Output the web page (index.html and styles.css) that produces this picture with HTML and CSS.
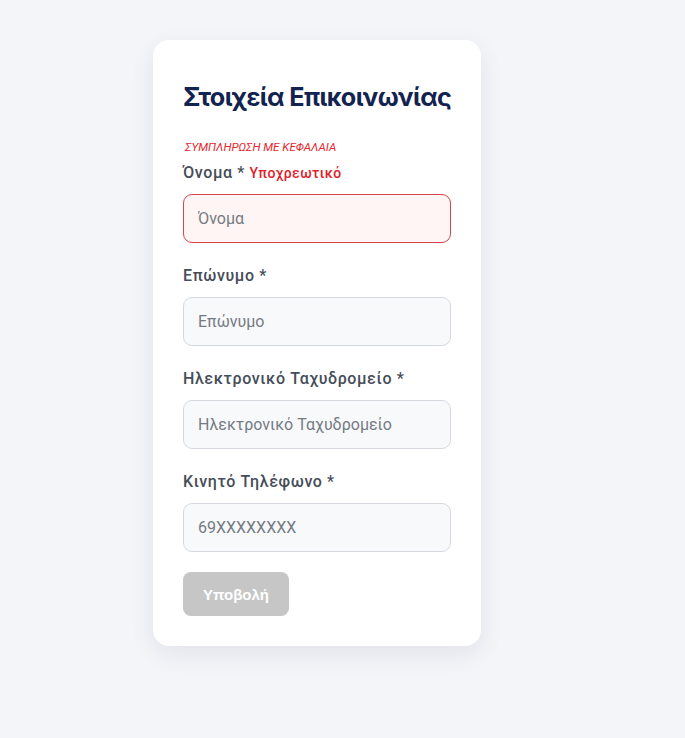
FILE: index.html
```html
<!DOCTYPE html>
<html lang="el">
<head>
<meta charset="utf-8">
<link rel="stylesheet" href="styles.css">
</head>
<body>
<div class="page">
  <form class="card">
    <h1 class="title">Στοιχεία Επικοινωνίας</h1>
    <p class="hint">ΣΥΜΠΛΗΡΩΣΗ ΜΕ ΚΕΦΑΛΑΙΑ</p>
    <div class="field">
      <label class="label">Όνομα * <span class="req">Υποχρεωτικό</span></label>
      <input class="input input-error" type="text" placeholder="Όνομα">
    </div>
    <div class="field">
      <label class="label">Επώνυμο *</label>
      <input class="input" type="text" placeholder="Επώνυμο">
    </div>
    <div class="field">
      <label class="label">Ηλεκτρονικό Ταχυδρομείο *</label>
      <input class="input" type="text" placeholder="Ηλεκτρονικό Ταχυδρομείο">
    </div>
    <div class="field">
      <label class="label">Κινητό Τηλέφωνο *</label>
      <input class="input" type="text" placeholder="69XXXXXXXX">
    </div>
    <button class="submit" type="button" disabled>Υποβολή</button>
  </form>
</div>
</body>
</html>
```
FILE: styles.css
```css
html, body {
  margin: 0;
  padding: 0;
  background: #f3f5f9;
}
.page {
  padding: 40px 0 0 153px;
  min-height: 698px;
}
.card {
  box-sizing: border-box;
  width: 328px;
  background: #ffffff;
  border-radius: 16px;
  padding: 30px 30px 30px 30px;
  box-shadow: 0 8px 24px rgba(20, 30, 60, 0.08);
  display: flex;
  flex-direction: column;
  font-family: Roboto, "Noto Sans", sans-serif;
}
.title {
  margin: 10px 0 0 0;
  font-family: Inter, "Noto Sans", sans-serif;
  font-weight: 700;
  font-size: 25.2px;
  line-height: 34px;
  color: #13234f;
  letter-spacing: -0.6px;
  white-space: nowrap;
}
.hint {
  margin: 26px 0 0 2px;
  font-size: 11.6px;
  line-height: 14px;
  font-style: italic;
  color: #e5262f;
}
.field {
  display: flex;
  flex-direction: column;
  margin-bottom: 22px;
}
.hint + .field {
  margin-top: 8px;
}
.label {
  font-size: 16px;
  line-height: 22px;
  font-weight: 500;
  color: #464d58;
  letter-spacing: 0.6px;
  margin-bottom: 10px;
}
.req {
  color: #e11d2a;
  font-size: 14px;
  font-weight: 500;
  letter-spacing: 0.4px;
}
.input {
  box-sizing: border-box;
  height: 49px;
  width: 268px;
  border: 1px solid #d5d9df;
  border-radius: 9px;
  background: #f8f9fb;
  padding: 0 14px;
  font-family: Roboto, sans-serif;
  font-size: 16px;
  color: #333;
  outline: none;
}
.input::placeholder {
  color: #757b83;
}
.input-error {
  border-color: #d8444c;
  background: #fff5f5;
}
.submit {
  align-self: flex-start;
  margin-top: -2px;
  width: 106px;
  height: 44px;
  border: none;
  border-radius: 8px;
  background: #c6c6c6;
  color: #ffffff;
  font-family: "Liberation Sans", Arial, sans-serif;
  font-weight: 700;
  font-size: 15px;
}
```
